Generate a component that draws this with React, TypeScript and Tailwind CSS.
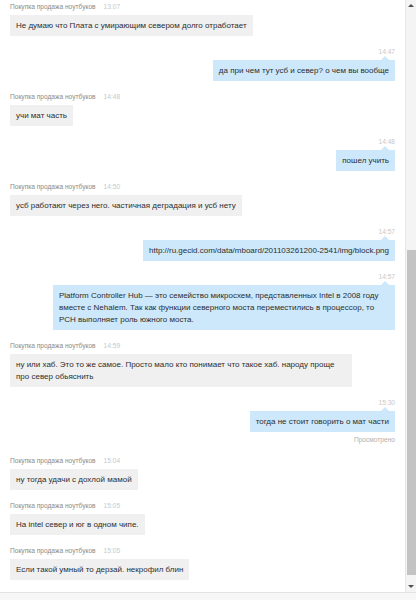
import React from "react";

type Msg = {
  out: boolean;
  time: string;
  text: string;
  seen?: boolean;
};

const messages: Msg[] = [
  { out: false, time: "13:07", text: "Не думаю что Плата с умирающим севером долго отработает" },
  { out: true, time: "14:47", text: "да при чем тут усб и север? о чем вы вообще" },
  { out: false, time: "14:48", text: "учи мат часть" },
  { out: true, time: "14:48", text: "пошел учить" },
  { out: false, time: "14:50", text: "усб работают через него. частичная деградация и усб нету" },
  { out: true, time: "14:57", text: "http://ru.gecid.com/data/mboard/201103261200-2541/img/block.png" },
  {
    out: true,
    time: "14:57",
    text: "Platform Controller Hub — это семейство микросхем, представленных Intel в 2008 году вместе с Nehalem. Так как функции северного моста переместились в процессор, то PCH выполняет роль южного моста.",
  },
  {
    out: false,
    time: "14:59",
    text: "ну или хаб. Это то же самое. Просто мало кто понимает что такое хаб. народу проще про север обьяснить",
  },
  { out: true, time: "15:30", text: "тогда не стоит говорить о мат части", seen: true },
  { out: false, time: "15:04", text: "ну тогда удачи с дохлой мамой" },
  { out: false, time: "15:05", text: "На intel север и юг в одном чипе." },
  { out: false, time: "15:05", text: "Если такой умный то дерзай. некрофил блин" },
];

function Incoming({ m }: { m: Msg }) {
  return (
    <div className="flex flex-col items-start">
      <div className="flex h-[10px] items-center gap-[8px] text-[6.6px] leading-[10px]">
        <span className="text-[#8a8a8a]">Покупка продажа ноутбуков</span>
        <span className="text-[#c8c8c8]">{m.time}</span>
      </div>
      <div className="mt-[3px] max-w-[342px] bg-[#f0f0f0] px-[6px] pt-[5px] pb-[4px] text-[8px] leading-[12px] text-[#2e2e2e]">
        {m.text}
      </div>
    </div>
  );
}

function Outgoing({ m }: { m: Msg }) {
  return (
    <div className="flex flex-col items-end">
      <div className="h-[10px] text-[6.6px] leading-[10px] text-[#c8c8c8]">{m.time}</div>
      <div className="relative mt-[3px] max-w-[342px] bg-[#cce8fa] px-[6px] pt-[5px] pb-[4px] text-[8px] leading-[12px] text-[#2e2e2e]">
        <span className="absolute -top-[4px] right-[6px] h-0 w-0 border-x-[4px] border-b-[4px] border-x-transparent border-b-[#cce8fa]" />
        {m.text}
      </div>
      {m.seen && <div className="mt-[3px] h-[10px] text-[6.6px] leading-[10px] text-[#b0b0b0]">Просмотрено</div>}
    </div>
  );
}

export default function App() {
  return (
    <div className="flex h-[600px] w-[416px] flex-col overflow-hidden bg-white font-['Liberation_Sans',Arial,sans-serif]">
      <div className="flex min-h-0 flex-1">
        {/* messages */}
        <div className="flex min-w-0 flex-1 flex-col gap-[11px] overflow-hidden pl-[10px] pr-[10px] pt-[2px]">
          {messages.map((m, i) => (m.out ? <Outgoing key={i} m={m} /> : <Incoming key={i} m={m} />))}
        </div>

        {/* scrollbar */}
        <div className="flex w-[11px] flex-col border-l border-[#e6e6e6] bg-[#f4f4f4]">
          <div className="flex h-[10px] items-center justify-center">
            <span className="h-0 w-0 border-x-[3px] border-b-[3px] border-x-transparent border-b-[#505050]" />
          </div>
          <div className="flex-1">
            <div className="mx-auto mt-[240px] h-[325px] w-[9px] bg-[#c3c3c3]" />
          </div>
          <div className="flex h-[12px] items-center justify-center">
            <span className="h-0 w-0 border-x-[3px] border-t-[3px] border-x-transparent border-t-[#505050]" />
          </div>
        </div>
      </div>
      <div className="h-[8px] border-t border-[#e3e3e3] bg-[#f7f7f7]" />
    </div>
  );
}
